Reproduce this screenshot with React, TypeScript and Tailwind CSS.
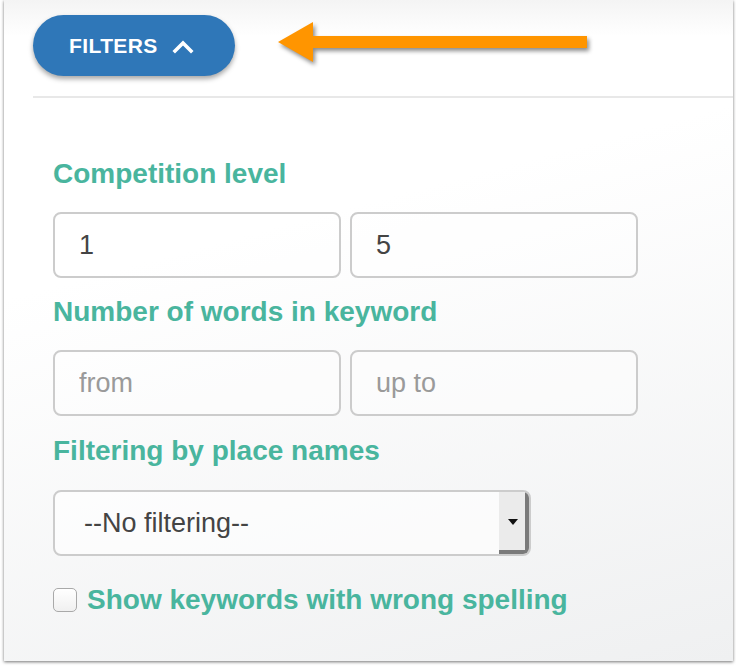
import { useState } from "react";

const labelCls = "text-[28px] leading-[34px] font-bold text-[#49b59e]";
const inputCls =
  "w-[288px] h-[66px] rounded-[8px] border-2 border-[#cccccc] bg-white/40 pl-[24px] text-[27px] text-[#444444] placeholder:text-[#9a9a9a] outline-none";

function Arrow() {
  return (
    <svg
      width="330"
      height="56"
      viewBox="0 0 330 56"
      className="absolute left-[271px] top-[18px] [filter:drop-shadow(2px_3px_2px_rgba(0,0,0,0.45))]"
    >
      <path d="M3 24 L38 4 L38 18 L312 18 L312 30 L38 30 L38 44 Z" fill="#ff9500" />
    </svg>
  );
}

export default function App() {
  const [min, setMin] = useState("1");
  const [max, setMax] = useState("5");

  return (
    <div className="w-[736px] h-[672px] bg-white font-['Liberation_Sans',Arial,sans-serif]">
      <div className="relative ml-[4px] w-[729px] h-[661px] shadow-[0_1px_3px_rgba(0,0,0,0.55)] bg-[linear-gradient(180deg,#f4f4f4_0px,rgba(255,255,255,0)_36px),linear-gradient(165deg,#ffffff_35%,#eff0f1_100%)]">
        <div className="pl-[29px] pt-[15px]">
          <button className="flex items-center w-[202px] h-[61px] rounded-full bg-[#2f77b8] pl-[36px] text-white text-[21px] font-bold tracking-[0.4px] shadow-[0_3px_5px_rgba(0,0,0,0.35)]">
            FILTERS
            <svg width="22" height="16" viewBox="0 0 22 16" className="ml-[14px]">
              <path
                d="M3 13 L11 5 L19 13"
                fill="none"
                stroke="white"
                strokeWidth="3.6"
                strokeLinecap="square"
              />
            </svg>
          </button>
          <div className="mt-[20px] h-[2px] bg-[#e8e8e8]" />
        </div>
        <Arrow />

        <form className="pl-[49px] pt-[59px]">
          <div className={labelCls}>Competition level</div>
          <div className="flex gap-[9px] mt-[21px]">
            <input
              className={inputCls}
              value={min}
              onChange={(e) => setMin(e.target.value)}
            />
            <input
              className={inputCls}
              value={max}
              onChange={(e) => setMax(e.target.value)}
            />
          </div>

          <div className={`${labelCls} mt-[17px]`}>Number of words in keyword</div>
          <div className="flex gap-[9px] mt-[21px]">
            <input className={inputCls} placeholder="from" />
            <input className={inputCls} placeholder="up to" />
          </div>

          <div className={`${labelCls} mt-[18px]`}>Filtering by place names</div>
          <div className="mt-[22px] relative flex items-center w-[478px] h-[66px] rounded-[8px] border-2 border-[#cccccc] bg-white/60 overflow-hidden">
            <span className="pl-[29px] text-[27px] text-[#444444]">--No filtering--</span>
            <div className="absolute right-0 top-0 bottom-0 w-[30px] flex items-center justify-center bg-[#ebebeb] shadow-[inset_-4px_-4px_0_#7a7a7a]">
              <svg width="12" height="8" viewBox="0 0 12 8" className="mr-[3px] mb-[2px]">
                <path d="M1 1 L11 1 L6 7 Z" fill="#111" />
              </svg>
            </div>
          </div>

          <label className="flex items-center mt-[27px]">
            <span className="w-[24px] h-[24px] rounded-[5px] border-[1.5px] border-[#a9a9a9] bg-[linear-gradient(180deg,#ffffff,#f0f0f0)]" />
            <span className="ml-[10px] text-[28px] leading-[34px] font-bold text-[#49b59e]">
              Show keywords with wrong spelling
            </span>
          </label>
        </form>
      </div>
    </div>
  );
}
